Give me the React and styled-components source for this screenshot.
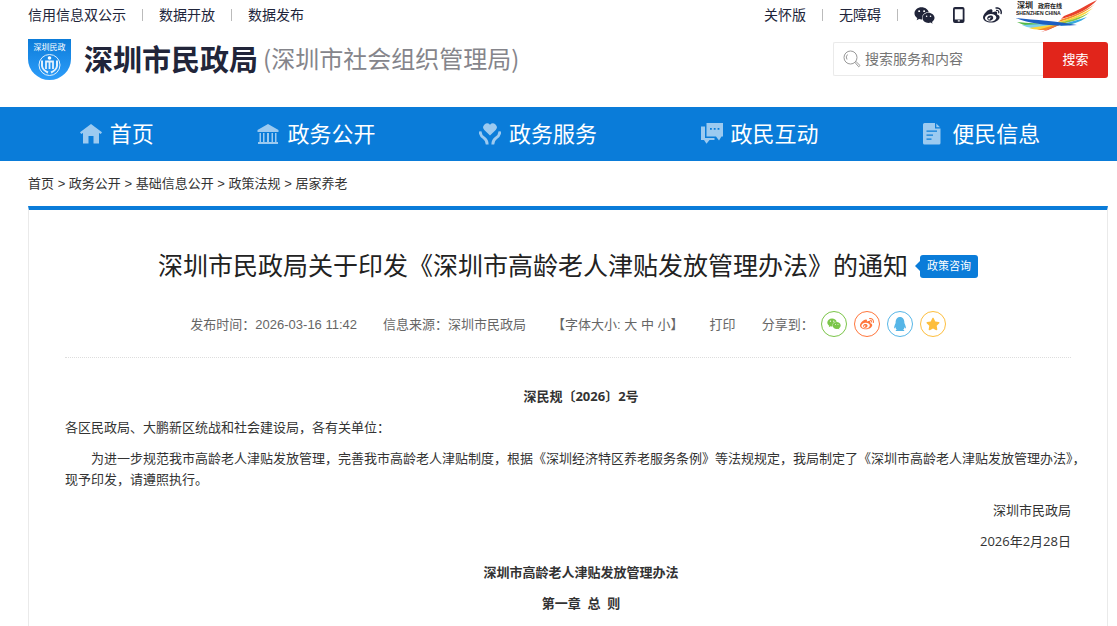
import React from 'react';
import styled, { createGlobalStyle } from 'styled-components';
import { FaWeixin, FaWeibo, FaQq, FaStar } from 'react-icons/fa';

const COLORS = {
  primary: '#0a7cd9',
  danger: '#e1251b',
  ink: '#21253a',
  text: '#333',
  muted: '#666',
  border: '#eaeaea',
};

const TOP_LINKS = ['信用信息双公示', '数据开放', '数据发布'];

const HomeIcon = () => (
  <NavSvg viewBox="0 0 22 22" aria-hidden="true">
    <path d="M11 1 22 9.3 20.800 11 19 10v10.500h-5.500v-7.500h-5v7.500H3V10L1.200 11 0 9.300Z" />
  </NavSvg>
);

const BankIcon = () => (
  <NavSvg viewBox="0 0 22 22" aria-hidden="true">
    <path d="M11 1 21.500 7v2H.5V7ZM2.500 10H4v9H2.500zM6 10h1.500v9H6zM10 10h2v9h-2zM14.500 10H16v9h-1.500zM18 10h1.500v9H18zM1 19h20v2H1z" />
  </NavSvg>
);

const CareIcon = () => (
  <NavSvg viewBox="0 0 22 22" aria-hidden="true">
    <path d="M11 12.500 5.300 7A3.600 3.600 0 0 1 11 1.700 3.600 3.600 0 0 1 16.700 7Z" />
    <path
      d="M1 8.500Q1.500 13 5 15 8.200 17 8.200 21.500M21 8.500Q20.500 13 17 15 13.800 17 13.800 21.500"
      fill="none"
      stroke="currentColor"
      strokeWidth="2.800"
    />
  </NavSvg>
);

const ChatIcon = () => (
  <NavSvg viewBox="0 0 22 22" aria-hidden="true">
    <path
      fillRule="evenodd"
      d="M5.500 0H22v13.500h-1.500L18 17.500 15 13.500H5.500ZM9 5v1.800h1.800V5Zm3.800 0v1.800h1.800V5Zm3.800 0v1.800h1.800V5Z"
    />
    <path d="M0 3.500h4V15h9.500v2H8.500L5.500 20.800 3 17H0Z" />
  </NavSvg>
);

const FileIcon = () => (
  <NavSvg viewBox="0 0 22 22" aria-hidden="true">
    <path
      fillRule="evenodd"
      d="M2.500 0H13v5.500h5.500V20a1.500 1.500 0 0 1-1.500 1.500H2.500A1.500 1.500 0 0 1 1 20V1.500A1.500 1.500 0 0 1 2.500 0ZM4.500 7.500v1.300H15V7.500Zm0 4v1.300H11v-1.300Zm0 4v1.300h5v-1.300Z"
    />
    <path d="M14.300.500 18 4.300h-3.700Z" />
  </NavSvg>
);

const NAV_ITEMS = [
  { label: '首页', Icon: HomeIcon },
  { label: '政务公开', Icon: BankIcon },
  { label: '政务服务', Icon: CareIcon },
  { label: '政民互动', Icon: ChatIcon },
  { label: '便民信息', Icon: FileIcon },
];

const CRUMBS = ['首页', '政务公开', '基础信息公开', '政策法规', '居家养老'];

const SHARE_ITEMS = [
  { label: '微信', color: '#7bc549', Icon: FaWeixin },
  { label: '微博', color: '#ff763b', Icon: FaWeibo },
  { label: 'QQ', color: '#56b6e7', Icon: FaQq },
  { label: 'QQ空间', color: '#fdbe3d', Icon: FaStar },
];

const PhoneIcon = () => (
  <svg width="12" height="16" viewBox="0 0 12 16" aria-hidden="true">
    <path
      fill="currentColor"
      fillRule="evenodd"
      d="M2 0h7.500a2 2 0 0 1 2 2v12a2 2 0 0 1-2 2H2a2 2 0 0 1-2-2V2a2 2 0 0 1 2-2ZM1.800 2.300v10.200h7.900V2.300Zm3 11v1.200h2v-1.200Z"
    />
  </svg>
);

const SearchIcon = () => (
  <svg width="18" height="18" viewBox="0 0 18 18" fill="none" stroke="#999" aria-hidden="true">
    <circle cx="7.500" cy="7.500" r="6.500" />
    <path d="M4 9.500a4 4 0 0 1 .5-5" />
    <path d="m12 12.500 1-1 4 4-1.300 1.300Z" />
  </svg>
);

const Emblem = () => (
  <svg width="43" height="41" viewBox="0 0 43 41" role="img" aria-label="深圳民政">
    <defs>
      <linearGradient id="shield" x1="0" y1="0" x2="0" y2="1">
        <stop offset="0" stopColor="#0c7cd9" />
        <stop offset="1" stopColor="#2d9dfa" />
      </linearGradient>
    </defs>
    <path d="M0 0h43v20a21.500 21 0 0 1-43 0Z" fill="url(#shield)" />
    <EmblemText x="21.500" y="11" textAnchor="middle">深圳民政</EmblemText>
    <g fill="none" stroke="#e3f1fd">
      <circle cx="21.500" cy="26" r="10.500" />
      <path d="M14 21.500v5.500q.5 4 6 6.500M29 21.500v5.500q-.5 4-6 6.500" strokeWidth="2" />
      <path d="M18 30v-7.500h7V30M21.500 22v8" strokeWidth="1.800" />
    </g>
    <circle cx="21.500" cy="19" r="1.800" fill="#fff" />
  </svg>
);

const CityLogo = () => (
  <svg width="82" height="32" viewBox="0 0 82 32" role="img" aria-label="深圳政府在线">
    <path d="M48 16C60 12 70 5 81 0 74 8 62 15 45 19Z" fill="#e8412c" />
    <path d="M45 19.500C60 15 72 9 79 4 70 12 58 18 42 22Z" fill="#f58a2a" />
    <path d="M44 21.500C58 18 70 12 77 8 68 16 56 21 38 24Z" fill="#fbd53a" />
    <path d="M44 22.500C56 20 68 16 74 12 66 19 54 23 38 25Z" fill="#8cc63f" />
    <path d="M46 24C56 22 64 19 71 17 64 22 56 25 44 26Z" fill="#35a9e1" />
    <path d="M1 22C20 24 38 24 58 23L30 27C18 27 8 26 1 22Z" fill="#54b948" />
    <path d="M6 25 46 23 30 29C20 29 12 28 6 25Z" fill="#7ed0ee" />
    <path d="M13 28 48 23 34 29C26 30 18 30 13 28Z" fill="#fbd53a" />
    <path d="M21 30 50 22 30 30Z" fill="#f58a2a" />
    <path d="M25 32 52 21 32 30Z" fill="#e8412c" />
    <path d="M0 18C20 20 40 21 61 25 38 27 14 24 0 18Z" fill="#1d5fc2" />
    <LogoText x="1" y="8" $size={8}>深圳</LogoText>
    <LogoText x="22" y="8" $size={6}>政府在线</LogoText>
    <LogoText x="0" y="15" $size={5}>SHENZHEN CHINA</LogoText>
  </svg>
);

const App = () => (
  <>
    <GlobalStyle />
    <Page>
      <Container as="header">
        <TopBar>
          <LinkList>
            {TOP_LINKS.map(label => (
              <TopItem key={label}><a href="#top">{label}</a></TopItem>
            ))}
          </LinkList>
          <TopTools>
            <LinkList>
              <TopItem><a href="#care">关怀版</a></TopItem>
              <TopItem><a href="#access">无障碍</a></TopItem>
              <TopItem>
                <ToolIcons>
                  <a href="#weixin" aria-label="微信"><FaWeixin size={21} /></a>
                  <a href="#mobile" aria-label="手机版"><PhoneIcon /></a>
                  <a href="#weibo" aria-label="微博"><FaWeibo size={19} /></a>
                </ToolIcons>
              </TopItem>
            </LinkList>
            <a href="#city"><CityLogo /></a>
          </TopTools>
        </TopBar>
        <Masthead>
          <Brand href="#home">
            <Emblem />
            <BrandName>深圳市民政局</BrandName>
            <BrandNote>(深圳市社会组织管理局)</BrandNote>
          </Brand>
          <SearchForm onSubmit={e => e.preventDefault()}>
            <SearchField>
              <SearchIcon />
              <SearchInput type="text" placeholder="搜索服务和内容" aria-label="搜索服务和内容" />
            </SearchField>
            <SearchButton type="submit">搜索</SearchButton>
          </SearchForm>
        </Masthead>
      </Container>

      <NavBar>
        <NavList>
          {NAV_ITEMS.map(({ label, Icon }) => (
            <li key={label}>
              <NavLink href="#nav">
                <Icon />
                <NavLabel>{label}</NavLabel>
              </NavLink>
            </li>
          ))}
        </NavList>
      </NavBar>

      <Main>
        <Breadcrumb aria-label="当前位置">
          {CRUMBS.map((label, index) => (
            <React.Fragment key={label}>
              {index > 0 && ' > '}
              <a href="#crumb">{label}</a>
            </React.Fragment>
          ))}
        </Breadcrumb>

        <Article>
          <Intro>
            <TitleRow>
              <Title>深圳市民政局关于印发《深圳市高龄老人津贴发放管理办法》的通知</Title>
              <ConsultLink href="#consult">政策咨询</ConsultLink>
            </TitleRow>

            <Meta>
              <span>发布时间：2026-03-16 11:42</span>
              <span>信息来源：深圳市民政局</span>
              <span>
                【字体大小:
                {' '}
                <TextButton type="button">大</TextButton>
                {' '}
                <TextButton type="button">中</TextButton>
                {' '}
                <TextButton type="button">小</TextButton>
                】
              </span>
              <TextButton type="button">打印</TextButton>
              <Share>
                分享到：
                {SHARE_ITEMS.map(({ label, color, Icon }) => (
                  <ShareLink key={label} href="#share" aria-label={label} $color={color}>
                    <Icon size={14} />
                  </ShareLink>
                ))}
              </Share>
            </Meta>
          </Intro>

          <Body>
            <Heading>深民规〔2026〕2号</Heading>
            <Paragraph>各区民政局、大鹏新区统战和社会建设局，各有关单位：</Paragraph>
            <Paragraph $indent>
              为进一步规范我市高龄老人津贴发放管理，完善我市高龄老人津贴制度，根据《深圳经济特区养老服务条例》等法规规定，我局制定了《深圳市高龄老人津贴发放管理办法》，现予印发，请遵照执行。
            </Paragraph>
            <Signature>深圳市民政局</Signature>
            <Signature>2026年2月28日</Signature>
            <Heading>深圳市高龄老人津贴发放管理办法</Heading>
            <Heading>第一章&nbsp; 总&nbsp; 则</Heading>
          </Body>
        </Article>
      </Main>
    </Page>
  </>
);

const GlobalStyle = createGlobalStyle`
  * {
    box-sizing: border-box;
  }

  body {
    margin: 0;
    background: #fff;
    color: ${COLORS.text};
    font-family: "Liberation Sans", "Noto Sans CJK SC", sans-serif;
    font-size: 13px;
  }

  a {
    color: inherit;
    text-decoration: none;
  }

  h1, p, ul {
    margin: 0;
    padding: 0;
  }

  ul {
    list-style: none;
  }

  svg {
    display: block;
  }
`;

const Page = styled.div`
  display: flex;
  flex-direction: column;
  min-height: 100vh;
`;

const Container = styled.div`
  padding: 0 9px 0 28px;
`;

const TopBar = styled.div`
  display: flex;
  justify-content: space-between;
  height: 32px;
  color: ${COLORS.ink};
  font-size: 14px;
  line-height: 30px;
`;

const LinkList = styled.ul`
  display: flex;
  height: 30px;
`;

const TopItem = styled.li`
  display: flex;
  align-items: center;

  & + &::before {
    content: '';
    width: 1px;
    height: 12px;
    margin: 0 16px;
    background: #bbb;
  }
`;

const TopTools = styled.div`
  display: flex;
  gap: 14px;
  padding-right: 10px;
`;

const ToolIcons = styled.span`
  display: flex;
  align-items: center;
  gap: 18px;
`;

const EmblemText = styled.text`
  fill: #fff;
  font-family: "Noto Sans CJK SC", sans-serif;
  font-size: 8px;
`;

const LogoText = styled.text`
  fill: #222;
  font-family: "Liberation Sans", "Noto Sans CJK SC", sans-serif;
  font-size: ${props => props.$size}px;
  font-weight: 700;
`;

const Masthead = styled.div`
  display: flex;
  justify-content: space-between;
  height: 75px;
  padding-top: 7px;
`;

const Brand = styled.a`
  display: flex;
  height: 41px;
  align-items: center;
`;

const BrandName = styled.span`
  margin: 0 5px 0 13px;
  padding-bottom: 4px;
  color: ${COLORS.ink};
  font-family: "Noto Sans CJK SC", sans-serif;
  font-size: 29px;
  font-weight: 700;
`;

const BrandNote = styled.span`
  padding-bottom: 4px;
  color: #85858b;
  font-family: "Noto Sans CJK SC", sans-serif;
  font-size: 24px;
`;

const SearchForm = styled.form`
  display: flex;
  align-items: flex-start;
  padding-top: 3px;
`;

const SearchField = styled.label`
  display: flex;
  align-items: center;
  gap: 4px;
  width: 210px;
  height: 34px;
  padding-left: 9px;
  border: 1px solid ${COLORS.border};
  border-right: 0;
  border-radius: 2px 0 0 2px;
`;

const SearchInput = styled.input`
  flex: 1;
  min-width: 0;
  padding: 0;
  border: 0;
  outline: 0;
  font: inherit;
  font-size: 14px;

  &::placeholder {
    color: #757575;
  }
`;

const SearchButton = styled.button`
  width: 65px;
  height: 36px;
  padding: 0 0 4px;
  border: 0;
  border-radius: 0 3px 3px 0;
  background: ${COLORS.danger};
  color: #fff;
  font: inherit;
  cursor: pointer;
`;

const NavBar = styled.nav`
  padding: 0 25px 0 28px;
  background: ${COLORS.primary};
`;

const NavList = styled.ul`
  display: flex;
  justify-content: space-around;
`;

const NavLink = styled.a`
  display: flex;
  align-items: center;
  gap: 8px;
  height: 54px;
  color: #fff;
  font-size: 22px;
`;

const NavLabel = styled.span`
  padding-bottom: 4px;
`;

const NavSvg = styled.svg`
  width: 22px;
  height: 22px;
  color: #9ccaf0;
  fill: currentColor;
`;

const Main = styled(Container)`
  display: flex;
  flex: 1;
  flex-direction: column;
`;

const Breadcrumb = styled.nav`
  height: 45px;
  line-height: 45px;
`;

const Article = styled.article`
  flex: 1;
  padding: 33px 20px 0 36px;
  border: 1px solid ${COLORS.border};
  border-top: 4px solid ${COLORS.primary};
  border-bottom: 0;
`;

const Intro = styled.header`
  margin-right: 16px;
`;

const TitleRow = styled.div`
  display: flex;
  align-items: center;
  justify-content: center;
  gap: 12px;
  height: 47px;
`;

const Title = styled.h1`
  padding-bottom: 6px;
  color: #222;
  font-size: 25px;
  font-weight: 400;
  white-space: nowrap;
`;

const ConsultLink = styled.a`
  position: relative;
  padding: 0 7px;
  border-radius: 3px;
  background: ${COLORS.primary};
  color: #fff;
  font-size: 11px;
  line-height: 23px;
  white-space: nowrap;

  &::before {
    content: '';
    position: absolute;
    top: 6px;
    left: -5px;
    border: 5px solid transparent;
    border-left: 0;
    border-right-color: ${COLORS.primary};
  }
`;

const Meta = styled.div`
  display: flex;
  align-items: center;
  justify-content: center;
  gap: 26px;
  height: 68px;
  border-bottom: 1px dotted #ddd;
  color: ${COLORS.muted};
  white-space: nowrap;
`;

const TextButton = styled.button`
  padding: 0;
  border: 0;
  background: none;
  color: inherit;
  font: inherit;
  cursor: pointer;
`;

const Share = styled.div`
  display: flex;
  align-items: center;
  gap: 7px;
`;

const ShareLink = styled.a`
  display: flex;
  align-items: center;
  justify-content: center;
  width: 26px;
  height: 26px;
  border: 1px solid ${props => props.$color};
  border-radius: 50%;
  color: ${props => props.$color};
`;

const Body = styled.div`
  display: flex;
  flex-direction: column;
  gap: 10px;
  padding: 28px 0 12px;
  font-family: "Open Sans", "Noto Sans CJK SC", sans-serif;
  line-height: 21px;
`;

const Paragraph = styled.p`
  text-indent: ${props => (props.$indent ? '2em' : '0')};
`;

const Heading = styled.p`
  padding-right: 16px;
  font-weight: 700;
  text-align: center;
  text-indent: 2em;
`;

const Signature = styled.p`
  padding-right: 16px;
  text-align: right;
`;

export default App;
